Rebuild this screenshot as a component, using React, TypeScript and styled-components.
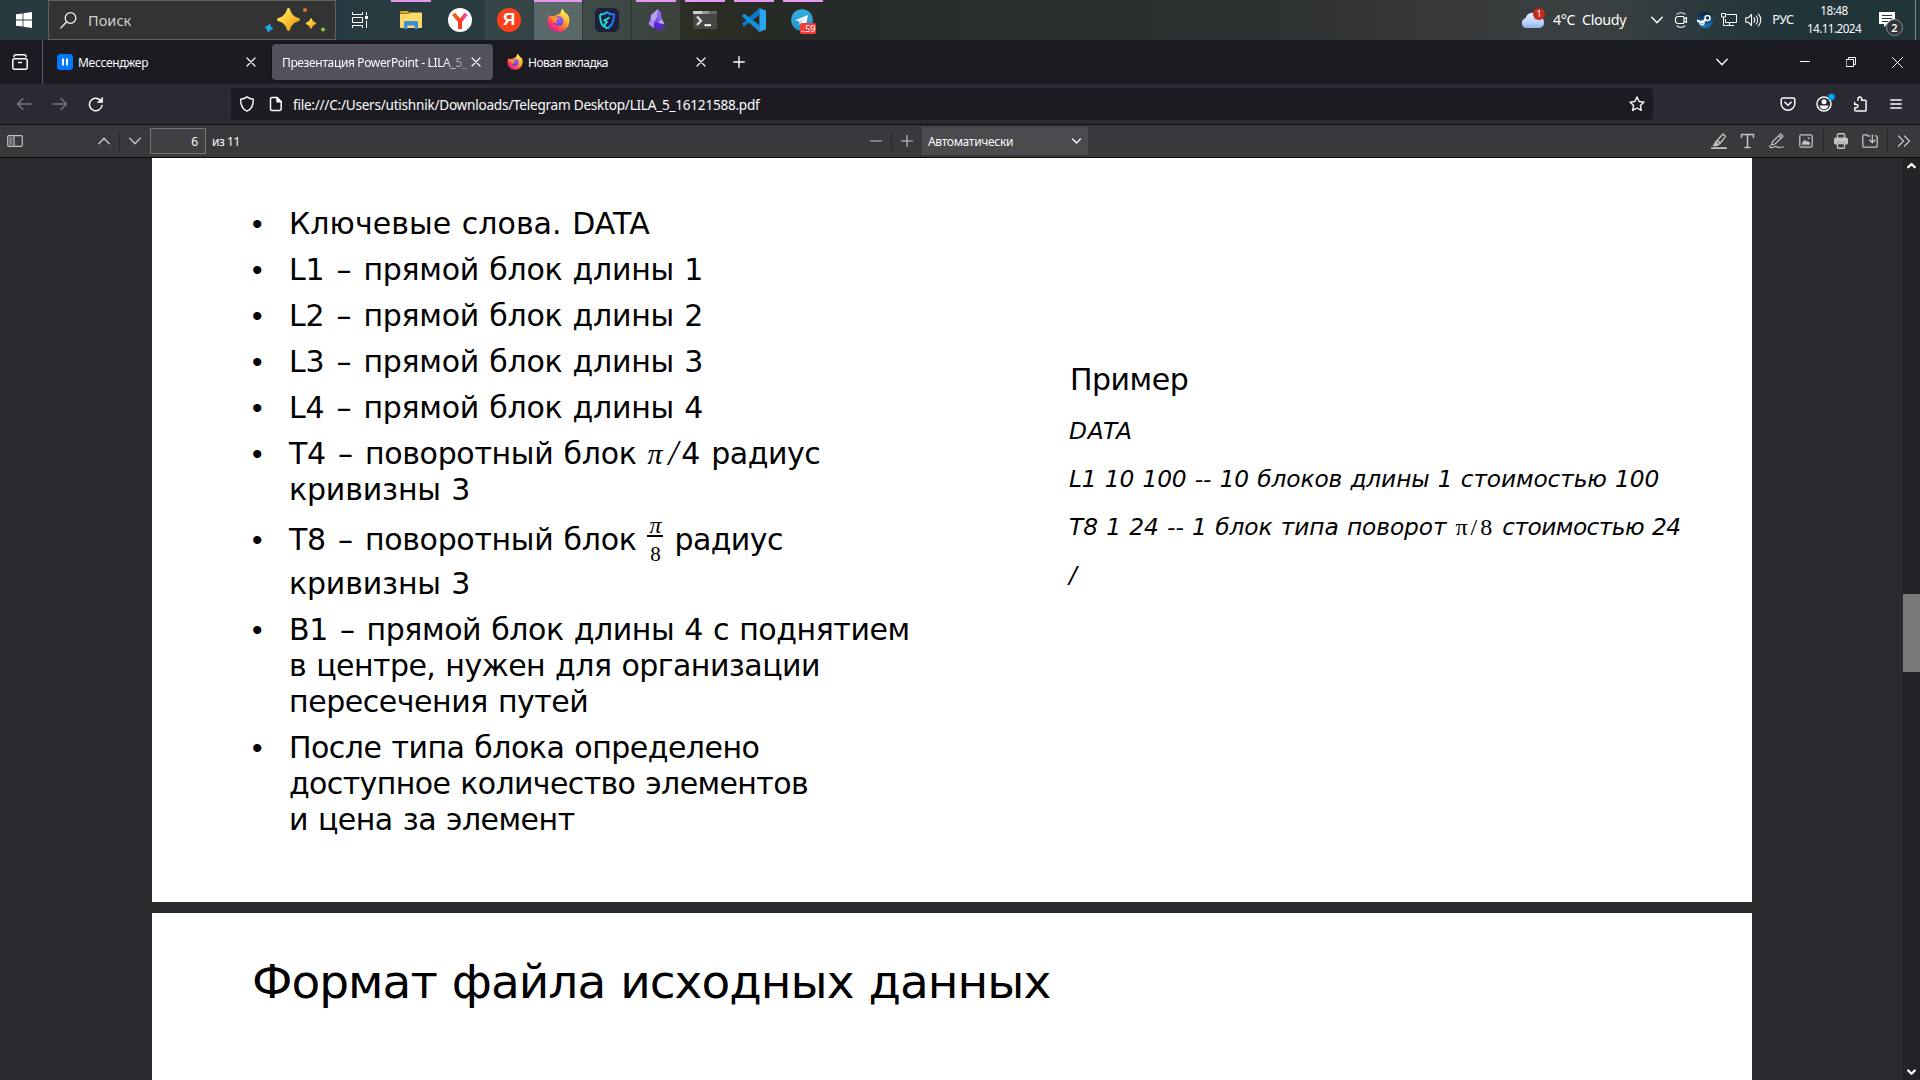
import React from 'react';
import styled, { createGlobalStyle, css } from 'styled-components';

const UI = '"Noto Sans", "Open Sans", sans-serif';
const SLIDE = '"DejaVu Sans", Verdana, sans-serif';
const MATH = '"Liberation Serif", "Times New Roman", serif';

const GlobalStyle = createGlobalStyle`
  *, *::before, *::after { box-sizing: border-box; }
  body { margin: 0; background: #2a2a2e; overflow: hidden; }
  svg { display: block; flex: none; }
`;

const Screen = styled.div`
  width: 1920px;
  height: 1080px;
  display: flex;
  flex-direction: column;
  overflow: hidden;
  font-family: ${UI};
  color: #fbfbfe;
`;

const Label = styled.span<{ $size: number; $track?: number; $color?: string; $drop?: number }>`
  font-size: ${p => p.$size}px;
  letter-spacing: ${p => p.$track ?? 0}px;
  color: ${p => p.$color ?? 'inherit'};
  line-height: 18px;
  padding-top: ${p => p.$drop ?? 0}px;
  white-space: pre;
`;

const Slot = styled.div<{ $w: number }>`
  width: ${p => p.$w}px;
  height: 100%;
  flex: none;
  display: flex;
  align-items: center;
  justify-content: center;
`;

/* ---------- taskbar ---------- */

const Taskbar = styled.header`
  height: 40px;
  flex: none;
  display: flex;
  align-items: stretch;
  background: linear-gradient(90deg, #25393e 0, #263b41 340px, #2a3b3e 500px, #2c3630 620px, #2b2d22 700px, #262b27 800px, #282c2b 960px, #2f3232 1300px, #383a39 1440px, #3a4042 1600px, #21343a 1780px, #20343a 100%);
`;

const SearchBox = styled.div`
  width: 288px;
  border: 1px solid #626262;
  background: #333333;
  display: flex;
  align-items: center;
  padding: 0 9px 0 11px;
`;

const SearchText = styled(Label)`
  margin-left: 11px;
  flex: 1;
`;

const TaskViewSlot = styled(Slot)`
  margin-right: 3px;
`;

const AppButton = styled.div<{ $tint?: number; $line?: 'short' | 'full' }>`
  width: 48px;
  margin-right: 1px;
  display: flex;
  align-items: center;
  justify-content: center;
  background-color: rgba(190, 205, 210, ${p => p.$tint ?? 0});
  ${p => p.$line && css`
    background-image: linear-gradient(#e697f2, #e697f2);
    background-repeat: no-repeat;
    background-position: top center;
    background-size: ${p.$line === 'full' ? '48px' : '40px'} 2px;
  `}
`;

const Tray = styled.div`
  margin-left: auto;
  display: flex;
  align-items: center;
`;

const Weather = styled.div`
  width: 124px;
  display: flex;
  align-items: center;
  gap: 8px;
`;

const Clock = styled.div`
  width: 66px;
  height: 40px;
  display: flex;
  flex-direction: column;
  align-items: center;
  padding-top: 1px;
`;

const ShowDesktop = styled.div`
  width: 5px;
  height: 40px;
  border-left: 1px solid #7d888b;
`;

/* ---------- tabs ---------- */

const TabStrip = styled.div`
  height: 44px;
  flex: none;
  background: #1c1b22;
  display: flex;
  align-items: center;
`;

const ViewButton = styled.div`
  width: 43px;
  height: 44px;
  padding-right: 2px;
  border-right: 1px solid #5b5b66;
  display: flex;
  align-items: center;
  justify-content: center;
`;

const Tabs = styled.div`
  height: 44px;
  display: flex;
  align-items: center;
  gap: 4px;
  margin-left: 4px;
`;

const Tab = styled.div<{ $active?: boolean }>`
  width: 221px;
  height: 36px;
  border-radius: 4px;
  padding: 0 12px 0 10px;
  display: flex;
  align-items: center;
  background: ${p => (p.$active ? '#52525e' : 'transparent')};
  box-shadow: ${p => (p.$active ? '0 0 3px rgba(0, 0, 0, .6)' : 'none')};
`;

const TabTitle = styled(Label)<{ $fade?: boolean }>`
  flex: 1;
  padding-left: ${p => (p.$fade ? 0 : 5)}px;
  margin-right: 2px;
  ${p => p.$fade && css`mask-image: linear-gradient(90deg, #000 160px, rgba(0, 0, 0, .25) 187px);`}
`;

const WindowControls = styled.div`
  margin-left: auto;
  height: 44px;
  display: flex;
`;

const ListTabs = styled(Slot)`
  margin-right: 43px;
`;

/* ---------- navigation ---------- */

const NavBar = styled.div`
  height: 40px;
  flex: none;
  background: #2b2a33;
  display: flex;
  align-items: center;
  padding: 0 6px;
`;

const UrlBar = styled.div`
  margin-left: 117px;
  width: 1422px;
  height: 32px;
  border-radius: 4px;
  background: #1c1b22;
  display: flex;
  align-items: center;
  padding-right: 8px;
`;

const TrackingSlot = styled(Slot)`
  padding-left: 2px;
`;

const DocSlot = styled(Slot)`
  padding-left: 1px;
`;

const Url = styled(Label)`
  margin-left: 4px;
  flex: 1;
`;

const NavRight = styled.div`
  margin-left: auto;
  height: 40px;
  display: flex;
`;

/* ---------- pdf viewer ---------- */

const PdfBar = styled.div`
  height: 34px;
  flex: none;
  border-top: 1px solid #0c0c0d;
  border-bottom: 1px solid #0c0c0d;
  background: #38383d;
  display: grid;
  grid-template-columns: 861px 230px 1fr;
  color: #f9f9fa;
`;

const PdfGroup = styled.div<{ $end?: boolean }>`
  display: flex;
  align-items: center;
  justify-content: ${p => (p.$end ? 'flex-end' : 'flex-start')};
`;

const Divider = styled.i<{ $h?: number; $after?: number }>`
  width: 1px;
  height: ${p => p.$h ?? 18}px;
  margin-right: ${p => p.$after ?? 0}px;
  background: #26262a;
`;

const SidebarToggle = styled(Slot)`
  margin-right: 59px;
`;

const PageInput = styled.div`
  width: 56px;
  height: 26px;
  margin-right: 6px;
  border: 1px solid #737378;
  background: #404044;
  display: flex;
  align-items: center;
  justify-content: flex-end;
  padding-right: 7px;
`;

const ZoomSelect = styled.div`
  width: 166px;
  height: 28px;
  background: #4a4a4f;
  display: flex;
  align-items: center;
  justify-content: space-between;
  padding: 0 7px 0 6px;
`;

const Viewer = styled.main`
  flex: 1;
  min-height: 0;
  display: grid;
  grid-template-columns: 1fr 17px;
  background: #2a2a2e;
`;

const Pages = styled.div`
  display: flex;
  flex-direction: column;
  gap: 11px;
  padding-left: 152px;
  overflow: hidden;
`;

const Page = styled.section<{ $h: number }>`
  width: 1600px;
  height: ${p => p.$h}px;
  flex: none;
  background: #ffffff;
  color: #000000;
  font-family: ${SLIDE};
  display: flex;
  align-items: flex-start;
`;

const Bullets = styled.ul`
  list-style: none;
  margin: 0;
  padding: 48px 0 0 100px;
  width: 917px;
  display: flex;
  flex-direction: column;
  gap: 10px;
`;

const Bullet = styled.li<{ $top?: number }>`
  display: flex;
  padding-top: ${p => p.$top ?? 0}px;
  &::before {
    content: '•';
    width: 37px;
    flex: none;
    font: 30px/36px "Liberation Sans", Arial, sans-serif;
  }
`;

const Lines = styled.div`
  display: flex;
  flex-direction: column;
`;

const Line = styled.div<{ $track?: number; $h?: number }>`
  height: ${p => p.$h ?? 36}px;
  display: flex;
  font-size: 30px;
  line-height: 36px;
  letter-spacing: ${p => p.$track ?? 0}px;
  word-spacing: 1px;
  white-space: pre;
`;

const Dash = styled.span`
  padding: 0 2px;
`;

const Run = styled.span<{ $track?: number; $left?: number }>`
  letter-spacing: ${p => p.$track ?? 0}px;
  margin-left: ${p => p.$left ?? 0}px;
`;

const Symbol = styled.span<{ $size: number; $left?: number; $italic?: boolean; $track?: number }>`
  font-family: ${MATH};
  font-style: ${p => (p.$italic ? 'italic' : 'normal')};
  font-size: ${p => p.$size}px;
  letter-spacing: ${p => p.$track ?? 0}px;
  margin-left: ${p => p.$left ?? 0}px;
`;

const Fraction = styled.span`
  width: 16px;
  height: 46px;
  margin: -7px 0 0 11px;
  display: flex;
  flex-direction: column;
  align-items: center;
  letter-spacing: 0;
  font: 21px/23px ${MATH};
`;

const Numerator = styled.span`
  height: 24px;
  line-height: 20px;
  font-style: italic;
  font-size: 24px;
`;

const FractionBar = styled.i`
  width: 16px;
  height: 2px;
  flex: none;
  background: #000;
`;

const Denominator = styled.span`
  padding-top: 6px;
`;

const Example = styled.div`
  padding-top: 204px;
`;

const ExampleLine = styled.div<{ $track?: number }>`
  height: 48px;
  display: flex;
  align-items: baseline;
  line-height: 48px;
  font-size: 23.3px;
  font-style: italic;
  letter-spacing: ${p => p.$track ?? 0}px;
  word-spacing: 1px;
  white-space: pre;
`;

const ExampleTitle = styled.div`
  height: 45px;
  padding-left: 1px;
  font-size: 30px;
  line-height: 36px;
  letter-spacing: -0.5px;
`;

const Heading = styled.h1`
  margin: 0;
  padding: 39px 0 0 100px;
  font-size: 47px;
  line-height: 60px;
  font-weight: 400;
  letter-spacing: -0.98px;
  word-spacing: 1px;
  white-space: nowrap;
`;

const Scrollbar = styled.div`
  background: #232327;
  display: flex;
  flex-direction: column;
  align-items: center;
  padding: 4px 0 4px;
`;

const Thumb = styled.div`
  width: 17px;
  height: 78px;
  margin: 425px 0 auto;
  background: #7a7a7c;
`;

/* ---------- icons ---------- */

type IconProps = { w: number; h?: number; sw?: number; color?: string; box?: string; children: React.ReactNode };
const Icon = ({ w, h = w, sw = 1.4, color = '#fbfbfe', box, children }: IconProps) => (
  <svg width={w} height={h} viewBox={box ?? `0 0 ${w} ${h}`} fill="none" stroke={color} strokeWidth={sw} strokeLinecap="round" strokeLinejoin="round">
    {children}
  </svg>
);

const Close = () => <Icon w={10} sw={1.2}><path d="M1 1l8 8M9 1l-8 8" /></Icon>;
const Chevron = ({ w = 12, up, color, sw = 1.4 }: { w?: number; up?: boolean; color?: string; sw?: number }) => (
  <Icon w={w} h={8} box="0 0 12 8" color={color} sw={sw}><path d={up ? 'M.8 6.7L6 1.3l5.200 5.400' : 'M.8 1.300L6 6.700l5.200-5.400'} /></Icon>
);

const Firefox = ({ s, id }: { s: number; id: string }) => (
  <svg width={s} height={s} viewBox="0 0 24 24">
    <defs>
      <linearGradient id={`${id}b`} x1=".85" y1=".1" x2=".2" y2=".95">
        <stop offset="0" stopColor="#fff44f" /><stop offset=".35" stopColor="#ffb02e" /><stop offset=".6" stopColor="#ff6a3a" /><stop offset=".85" stopColor="#f5287a" /><stop offset="1" stopColor="#e0159a" />
      </linearGradient>
      <linearGradient id={`${id}y`} x1="0" y1="0" x2="0" y2="1"><stop offset="0" stopColor="#fff44f" /><stop offset="1" stopColor="#ffa930" /></linearGradient>
      <radialGradient id={`${id}p`} cx=".6" cy=".3" r=".8"><stop offset="0" stopColor="#a35cff" /><stop offset="1" stopColor="#5b3fd6" /></radialGradient>
    </defs>
    <path d="M2.800 5.600C3.100 6.900 3.400 7.400 4 7.900c1.300-.5 2.700-.5 3.800-.1C9 6.500 10.300 6 11.300 5.800l3-1.500C14.300 2.400 15.200 1 16.600 0c.2 1.900 1.500 2.900 2.900 4.400.4.500.7 1 .9 1.400l.4-1.200c2 2.300 2.900 5.300 2.600 8.600C22.900 19.200 18.100 23.800 12 23.800 5.600 23.800.7 19 .7 12.700c0-2.800.8-5.300 2.100-7.100z" fill={`url(#${id}b)`} />
    <path d="M14.300 4.300C14.300 2.400 15.200 1 16.600 0c.2 1.900 1.500 2.900 2.900 4.400 2.900 3.600 2.600 8.800-.4 11.400.5-3.400-.7-5.200-2.100-6.900-1.600-1.300-2.700-2.600-2.700-4.600z" fill={`url(#${id}y)`} />
    <circle cx="12.200" cy="12.600" r="5" fill={`url(#${id}p)`} />
    <path d="M4 7.900c2-.8 4.200-.3 5.300.9 1.400-.2 2.900.2 3.300.9-.3 1.200-2.500 1.300-2.900 2.200-.4 1 .3 2 1.600 2.300-2 1-4.600-.2-4.900-2.600C5.300 11 4.200 9.800 4 7.900z" fill="#ff9a2b" />
  </svg>
);

const Windows = () => (
  <svg width="16" height="16" viewBox="0 0 16 16" fill="#fff">
    <path d="M0 2.300l6.600-.9v6.200H0zM7.400 1.300L16 .1v7.500H7.400zM0 8.400h6.600v6.200L0 13.700zM7.400 8.400H16v7.500l-8.600-1.200z" />
  </svg>
);

const star4 = (cx: number, cy: number, r: number) => {
  const k = r * 0.2;
  return `M${cx} ${cy - r}Q${cx + k} ${cy - k} ${cx + r} ${cy}Q${cx + k} ${cy + k} ${cx} ${cy + r}Q${cx - k} ${cy + k} ${cx - r} ${cy}Q${cx - k} ${cy - k} ${cx} ${cy - r}z`;
};

const Sparkles = () => (
  <svg width="62" height="28" viewBox="0 0 62 28">
    <defs><linearGradient id="gold" x1="0" y1="0" x2="1" y2="1"><stop offset=".2" stopColor="#ffdf4d" /><stop offset=".8" stopColor="#f0a81c" /></linearGradient></defs>
    <path d={star4(24.5, 13.5, 10)} fill="url(#gold)" stroke="url(#gold)" strokeWidth="3" strokeLinejoin="round" />
    <path d={star4(47, 17.5, 4.5)} fill="url(#gold)" stroke="url(#gold)" strokeWidth="1.500" strokeLinejoin="round" />
    <path d={star4(5, 22, 3.4)} fill="#1ea7e8" stroke="#1ea7e8" strokeWidth="1.600" strokeLinejoin="round" transform="rotate(12 5 22)" />
    <circle cx="41" cy="4" r="2.100" fill="#f0682a" />
    <circle cx="59" cy="23.500" r="2.100" fill="#84c341" />
  </svg>
);

const TaskView = () => (
  <svg width="16" height="16" viewBox="0 0 16 16" fill="none" stroke="#fff">
    <path d="M.5 0v2.500h10V0M.5 16v-2.500h10V16M.5 5.500h10v5H.5zM14.500 0v3.500M14.500 8.500V16" /><path d="M13 4h3v3h-3z" fill="#fff" stroke="none" />
  </svg>
);

const Folder = () => (
  <svg width="22" height="18" viewBox="0 0 22 18">
    <path d="M0 1a1 1 0 011-1h7l2 2.500H0z" fill="#e8a317" /><path d="M0 3l9-.2L10.500 1.500H21a1 1 0 011 1V17H0z" fill="#ffd869" />
    <path d="M4 18v-6.500a1.500 1.500 0 011.500-1.500h11a1.500 1.500 0 011.500 1.500V18h-3.500v-3.500h-7V18z" fill="#3a8fd8" />
  </svg>
);

const Round = styled.span<{ $bg: string }>`
  width: 24px;
  height: 24px;
  border-radius: 50%;
  background: ${p => p.$bg};
  color: #fff;
  font: 700 17px/24px "Liberation Sans", Arial, sans-serif;
  text-align: center;
`;

const YBrowser = () => (
  <svg width="24" height="24" viewBox="0 0 24 24">
    <defs><linearGradient id="ybr" x1="0" y1="0" x2="1" y2="0"><stop offset=".1" stopColor="#ff5c1a" /><stop offset=".55" stopColor="#fb3b20" /><stop offset="1" stopColor="#f54bd0" /></linearGradient></defs>
    <circle cx="12" cy="12" r="12" fill="#fff" />
    <path d="M5.500 5.800L12 13.500l6.200-7.700M12 12.500V21" stroke="url(#ybr)" strokeWidth="3.800" fill="none" />
    <path d="M12 13v8" stroke="#fb3b20" strokeWidth="3.800" />
  </svg>
);

const Shield = () => (
  <svg width="24" height="24" viewBox="0 0 24 24">
    <defs><linearGradient id="shd" x1="0" y1="0" x2="1" y2="0"><stop offset="0" stopColor="#17dfe0" /><stop offset="1" stopColor="#1769ff" /></linearGradient></defs>
    <rect width="24" height="24" rx="5" fill="#1f2038" />
    <path d="M5 6.500c3 0 5-.8 7-2.200 2 1.400 4 2.200 7 2.200 0 7-1.500 11-6.500 14" fill="none" stroke="url(#shd)" strokeWidth="2.200" />
    <path d="M5 6.500c0 5 .6 8.500 3 11.500M14.500 9.500l-5 2.800 2.300 1.700-3 4.200 3.700 2.300" fill="none" stroke="#17dfe0" strokeWidth="1.900" />
  </svg>
);

const Obsidian = () => (
  <svg width="18" height="24" viewBox="0 0 18 24">
    <path d="M4 7L11 1l3 4 .5 6 3 5-3.500 6.500-7-2L1.500 16z" fill="#7b4de0" />
    <path d="M4 7l7-6-.5 7L7 14l-3 .5z" fill="#b9a1f5" /><path d="M11 1l3 4 .5 6-3 4-1-7z" fill="#8a63e8" />
    <path d="M1.500 16L4 12l3 2-.2 6z" fill="#a78bf5" /><path d="M7 14l4.500 1 6 1-3.500 6.500-7-2z" fill="#5929c9" /><path d="M11.500 15l3-4 3 5z" fill="#c3b0f8" />
  </svg>
);

const Terminal = () => (
  <svg width="24" height="18" viewBox="0 0 24 18">
    <rect width="24" height="18" rx="1" fill="#464646" /><path d="M0 1a1 1 0 011-1h8v3H0z" fill="#cfcfcf" /><path d="M9 0h7v3H9z" fill="#9a9a9a" /><path d="M16 0h7a1 1 0 011 1v2h-8z" fill="#6a6a6a" />
    <path d="M4 5.500l4 4.200L4 14" fill="none" stroke="#d8d8d8" strokeWidth="2.400" /><path d="M11.500 14.200H18" stroke="#fff" strokeWidth="2" />
  </svg>
);

const VsCode = () => (
  <svg width="24" height="24" viewBox="0 0 24 24">
    <path d="M.5 15.200L17.500 0v6.800L2.800 17.900a1 1 0 01-1.200 0l-1.200-1.100a1.100 1.100 0 01.1-1.600z" fill="#0b77c5" />
    <path d="M.5 8.800L17.500 24v-6.800L2.800 6.100a1 1 0 00-1.200 0L.4 7.200a1.100 1.100 0 00.1 1.600z" fill="#1590dd" />
    <path d="M17.400 0L24 2.800v18.400L17.400 24z" fill="#29a8f2" />
  </svg>
);

const TelegramWrap = styled.div`
  width: 24px;
  height: 24px;
  position: relative;
`;

const TelegramBadge = styled.span`
  position: absolute;
  left: 9px;
  top: 15px;
  width: 16px;
  height: 11px;
  border-radius: 2px;
  background: #f23c34;
  font: 9px/11px ${UI};
  letter-spacing: -0.1px;
  text-align: center;
  color: #fff;
`;

const Telegram = () => (
  <TelegramWrap>
    <svg width="22" height="24" viewBox="0 0 22 24">
      <defs><linearGradient id="tg" x1="0" y1="0" x2="0" y2="1"><stop offset="0" stopColor="#37aee2" /><stop offset="1" stopColor="#1e96c8" /></linearGradient></defs>
      <circle cx="11" cy="12" r="10.800" fill="url(#tg)" /><path d="M4 12.200L17 7l-2.300 11-4-3-2 2-.5-3.800z" fill="#fff" /><path d="M8.500 13.200L14.500 9l-4.700 5.500-.9 2z" fill="#b5d4e8" />
    </svg>
    <TelegramBadge>..59</TelegramBadge>
  </TelegramWrap>
);

const CloudWrap = styled.div`
  width: 24px;
  height: 24px;
  position: relative;
`;

const AlertBadge = styled.span`
  position: absolute;
  left: 12px;
  top: 0;
  width: 12px;
  height: 12px;
  border-radius: 50%;
  background: #c42b1c;
  font: 9px/12px ${UI};
  text-align: center;
`;

const Cloud = () => (
  <CloudWrap>
    <svg width="24" height="24" viewBox="0 0 24 24">
      <defs><linearGradient id="cl" x1="0" y1="0" x2="0" y2="1"><stop offset="0" stopColor="#e8f1ff" /><stop offset=".7" stopColor="#b3cdf8" /><stop offset="1" stopColor="#8fb2ee" /></linearGradient></defs>
      <path d="M5 20a5 5 0 01-.6-9.700 7.800 7.800 0 0114.500-1A5.500 5.500 0 0118.700 20z" fill="url(#cl)" />
    </svg>
    <AlertBadge>1</AlertBadge>
  </CloudWrap>
);

const Meet = () => (
  <Icon w={14} h={18} sw={1.1} color="#fff"><path d="M3 3.200C5 1.200 9 1.200 11 3.200M3 14.800c2 2 6 2 8 0M4 5.500h5a1 1 0 011 1v5a1 1 0 01-1 1H4A2.500 2.500 0 011.500 10V8A2.500 2.500 0 014 5.500zM10 8l2.500-1.500v5L10 10" /></Icon>
);

const Steam = () => (
  <svg width="16" height="16" viewBox="0 0 16 16">
    <defs><linearGradient id="st" x1="0" y1="0" x2="0" y2="1"><stop offset="0" stopColor="#0b1a3a" /><stop offset="1" stopColor="#1a7fc4" /></linearGradient></defs>
    <circle cx="8" cy="8" r="8" fill="url(#st)" /><path d="M0 8.500l5 2 4-3" stroke="#fff" strokeWidth="2.200" fill="none" />
    <circle cx="5" cy="11" r="2" fill="none" stroke="#fff" strokeWidth="1.200" /><circle cx="10.500" cy="6" r="2.500" fill="#12305c" stroke="#fff" strokeWidth="1.500" />
  </svg>
);

const Network = () => (
  <svg width="16" height="14" viewBox="0 0 16 14" fill="none" stroke="#fff"><path d="M5.500 1.500h10v8h-11V6M8.500 9.500v3M5 12.500h8M.5.500h4v3.500h-4zM2.500 4v8.500h2" /></svg>
);

const Volume = () => (
  <Icon w={17} h={14} sw={1.1} color="#fff"><path d="M.8 4.800h2.400L6.500 1.500v11L3.200 9.200H.8zM9 4.800c1 1.300 1 3.100 0 4.400M11.200 3c2 2.300 2 5.700 0 8M13.500 1.200c3 3.400 3 8.200 0 11.600" /></Icon>
);

const NotifyWrap = styled.div`
  width: 24px;
  height: 26px;
  position: relative;
`;

const NotifyBadge = styled.span`
  position: absolute;
  left: 7px;
  top: 12px;
  width: 17px;
  height: 17px;
  border-radius: 50%;
  border: 1px solid #8d9294;
  background: #303436;
  font: 600 11px/15px ${UI};
  text-align: center;
`;

const NotifyGlyph = styled.svg`
  margin-top: 4px;
`;

const Notifications = () => (
  <NotifyWrap>
    <NotifyGlyph width="16" height="18" viewBox="0 0 16 18"><path d="M0 1h16v12H8l-3 3v-3H0z" fill="#fff" /><path d="M3 4.500h10M3 7.500h10M3 10.500h6" stroke="#26373c" /></NotifyGlyph>
    <NotifyBadge>2</NotifyBadge>
  </NotifyWrap>
);

const TabView = () => (
  <Icon w={16} sw={1.5}><rect x=".8" y="4.800" width="14.400" height="10.400" rx="2" /><path d="M2 2.800h0C2 1.500 3 .8 4 .8h8c1 0 2 .7 2 2M6.500 8.500h3" /></Icon>
);

const Messenger = () => (
  <svg width="16" height="16" viewBox="0 0 16 16"><rect width="16" height="16" rx="3.500" fill="#0077ff" /><path d="M6 4.500v7M10 4.500v7" stroke="#fff" strokeWidth="2" /></svg>
);

const Back = () => <Icon w={16} color="#77767e"><path d="M1.500 8H15M7 2.500L1.500 8 7 13.500" /></Icon>;
const Forward = () => <Icon w={16} color="#77767e"><path d="M14.500 8H1M9 2.500L14.500 8 9 13.500" /></Icon>;
const Reload = () => <Icon w={16} sw={1.5}><path d="M14 9.500A6.300 6.300 0 1112.200 4" /><path d="M14.600 1.400v5h-5z" fill="#fbfbfe" strokeWidth=".6" /></Icon>;
const Tracking = () => <Icon w={16}><path d="M8 .9c2 1.400 4 2.100 6.300 2.300C14.500 8.800 12.600 13.200 8 15.200 3.400 13.200 1.500 8.800 1.700 3.200 4 3 6 2.300 8 .9z" /></Icon>;
const Doc = () => <Icon w={16} sw={1.5}><path d="M4 1.500h5L13.200 5.700V13a1.500 1.500 0 01-1.500 1.500H4A1.500 1.500 0 012.500 13V3A1.500 1.500 0 014 1.500z" /><path d="M9 1.500v4.200h4.200z" fill="#fbfbfe" /></Icon>;
const Star = () => <Icon w={16}><path d="M8 1l2.100 4.500 4.900.6-3.600 3.400.9 4.900L8 12l-4.300 2.400.9-4.900L1 6.100l4.900-.6z" /></Icon>;
const Pocket = () => <Icon w={16} sw={1.5}><path d="M3 2h10a1.800 1.800 0 011.800 1.800V7.500a6.800 6.800 0 01-13.600 0V3.800A1.800 1.800 0 013 2z" /><path d="M4.800 6.300L8 9.300l3.200-3" /></Icon>;
const Account = () => (
  <svg width="22" height="22" viewBox="0 0 22 22">
    <circle cx="11" cy="11" r="7" fill="none" stroke="#fbfbfe" strokeWidth="1.500" /><circle cx="11" cy="8.800" r="2.500" fill="#fbfbfe" /><path d="M6.500 12.500h9c-.4 2.200-2.200 3.700-4.500 3.700s-4.100-1.500-4.500-3.700z" fill="#fbfbfe" />
    <circle cx="18.500" cy="4" r="3.300" fill="#00a2f4" />
  </svg>
);
const Extension = () => <Icon w={16} sw={1.5}><path d="M6 4.200V2.800a1.800 1.800 0 013.600 0v1.400h3.500a1 1 0 011 1v9a.9.900 0 01-.9.900H4a1.300 1.300 0 01-1.300-1.300v-2h1.600a1.700 1.700 0 000-3.400H2.700V6.600" /></Icon>;
const Menu = () => <Icon w={12} h={10} sw={1.5}><path d="M.8 1h10.400M.8 5h10.400M.8 9h10.400" /></Icon>;

const G = '#c4c4c6';
const Sidebar = () => <Icon w={16} h={12} sw={1.2} color={G}><rect x=".7" y=".7" width="14.600" height="10.600" rx="1.200" /><path d="M7 .8v10.400M2.500 3h2.500M2.500 5h2.500M2.500 7h2.500M2.500 9h2.500" /></Icon>;
const Highlight = () => <Icon w={16} sw={1.3} color={G}><path d="M.8 15.200h14.400" strokeWidth="1.800" /><path d="M12 1l2.500 2.300-5 6.700-3.200-2.700zM6 7.500L9 10l-1.500 1.700-3-2.200z" /><path d="M4.500 9.500l2.500 2-1.200 1H2.500z" fill={G} /></Icon>;
const FreeText = () => <Icon w={15} h={16} sw={1.5} color={G}><path d="M1.500 4.500V1.500h12v3M7.500 1.500v13M5 14.500h5" /></Icon>;
const Draw = () => <Icon w={16} sw={1.2} color={G}><path d="M11.500 1l2.500 2.300L6 11l-3.500 1 1.200-3.500zM9.800 2.800l2.500 2.300M1 12.500c-.8 1.500.5 2.500 2.500 2s2.500-1.500 4-1 1 1.500 2.500 1 2.500-.6 4.500-.5" /></Icon>;
const Image = () => <Icon w={14} sw={1.3} color={G}><rect x=".8" y=".8" width="12.400" height="12.400" rx="1.500" /><path d="M3.300 10.500V8.700L5.700 6l2 2 1-1 2 1.800v1.700z" fill={G} strokeWidth=".5" /><path d="M9.500 4.300h.6" strokeWidth="1.600" /></Icon>;
const Print = () => (
  <svg width="14" height="16" viewBox="0 0 14 16"><path d="M3.500 5V1.500A.8.800 0 014.300.7h5.400a.8.800 0 01.8.8V5M3.500 10.500h7v4a.8.800 0 01-.8.800H4.300a.8.800 0 01-.8-.8z" fill="none" stroke={G} strokeWidth="1.400" /><path d="M2 4.500h10a2 2 0 012 2V10a1.500 1.500 0 01-1.500 1.500h-1.300V9.700H2.800v1.800H1.500A1.500 1.500 0 010 10V6.500a2 2 0 012-2z" fill={G} /></svg>
);
const Save = () => <Icon w={16} h={14} sw={1.3} color={G}><path d="M7.500 2H6L5 .8H2A1.200 1.200 0 00.8 2v10A1.200 1.200 0 002 13.200h12a1.200 1.200 0 001.200-1.200V3A1.200 1.200 0 0014 1.800h-.8M10.300.8v7.500M7.500 6l2.800 2.800L13 6" /></Icon>;
const More = () => <Icon w={14} h={12} sw={1.3} color={G}><path d="M1.500 1l5 5-5 5M7.500 1l5 5-5 5" /></Icon>;
const ScrollArrow = ({ up }: { up?: boolean }) => <Icon w={9} h={7} sw={2.3} color="#fff"><path d={up ? 'M1.200 5.300L4.500 2l3.300 3.300' : 'M1.200 1.500L4.500 4.800l3.300-3.300'} /></Icon>;

/* ---------- page ---------- */

const straight = [1, 2, 3, 4];

export default function App() {
  return (
    <Screen>
      <GlobalStyle />
      <Taskbar>
        <Slot $w={48}><Windows /></Slot>
        <SearchBox>
          <Icon w={17} sw={1.3} color="#f0f0f0"><circle cx="10.500" cy="6" r="5.300" /><path d="M6.700 9.800L.8 16" /></Icon>
          <SearchText $size={14.5} $track={0.05} $color="#d0d0d0">Поиск</SearchText>
          <Sparkles />
        </SearchBox>
        <TaskViewSlot $w={48}><TaskView /></TaskViewSlot>
        <AppButton $line="short"><Folder /></AppButton>
        <AppButton><YBrowser /></AppButton>
        <AppButton $tint={0.08}><Round $bg="#fc3f1d">Я</Round></AppButton>
        <AppButton $tint={0.32} $line="full"><Firefox s={23} id="task" /></AppButton>
        <AppButton $tint={0.12}><Shield /></AppButton>
        <AppButton $tint={0.12} $line="short"><Obsidian /></AppButton>
        <AppButton $line="short"><Terminal /></AppButton>
        <AppButton $line="short"><VsCode /></AppButton>
        <AppButton $line="short"><Telegram /></AppButton>
        <Tray>
          <Weather>
            <Cloud />
            <Label $size={14.3} $track={-0.35}>4°C  Cloudy</Label>
          </Weather>
          <Slot $w={24}><Chevron color="#fff" /></Slot>
          <Slot $w={24}><Meet /></Slot>
          <Slot $w={24}><Steam /></Slot>
          <Slot $w={24}><Network /></Slot>
          <Slot $w={24}><Volume /></Slot>
          <Slot $w={36}><Label $size={12.6} $track={-0.4}>РУС</Label></Slot>
          <Clock>
            <Label $size={11.7} $track={-0.5}>18:48</Label>
            <Label $size={11.7} $track={-0.55}>14.11.2024</Label>
          </Clock>
          <Slot $w={48}><Notifications /></Slot>
          <ShowDesktop />
        </Tray>
      </Taskbar>

      <TabStrip>
        <ViewButton><TabView /></ViewButton>
        <Tabs>
          <Tab>
            <Messenger />
            <TabTitle $size={12} $track={-0.3} $drop={2}>Мессенджер</TabTitle>
            <Close />
          </Tab>
          <Tab $active>
            <TabTitle $fade $size={12} $track={-0.36} $drop={2}>Презентация PowerPoint - LILA_5_</TabTitle>
            <Close />
          </Tab>
          <Tab>
            <Firefox s={16} id="tab" />
            <TabTitle $size={12} $track={-0.5} $drop={2}>Новая вкладка</TabTitle>
            <Close />
          </Tab>
          <Slot $w={34}><Icon w={12}><path d="M6 .7v10.600M.7 6h10.600" /></Icon></Slot>
        </Tabs>
        <WindowControls>
          <ListTabs $w={34}><Chevron /></ListTabs>
          <Slot $w={46}><Icon w={10} h={10} sw={1} color="#fff"><path d="M.5 4.500h9" /></Icon></Slot>
          <Slot $w={46}><Icon w={10} sw={1} color="#fff"><path d="M.5 2.500h7v7h-7zM2.500 2.500v-2h7v7h-2" /></Icon></Slot>
          <Slot $w={46}><Icon w={11} sw={1} color="#fff"><path d="M.5.5l10 10M10.500.5l-10 10" /></Icon></Slot>
        </WindowControls>
      </TabStrip>

      <NavBar>
        <Slot $w={36}><Back /></Slot>
        <Slot $w={36}><Forward /></Slot>
        <Slot $w={36}><Reload /></Slot>
        <UrlBar>
          <TrackingSlot $w={30}><Tracking /></TrackingSlot>
          <DocSlot $w={28}><Doc /></DocSlot>
          <Url $size={13.6} $track={-0.25} $drop={2}>file:///C:/Users/utishnik/Downloads/Telegram Desktop/LILA_5_16121588.pdf</Url>
          <Star />
        </UrlBar>
        <NavRight>
          <Slot $w={36}><Pocket /></Slot>
          <Slot $w={36}><Account /></Slot>
          <Slot $w={36}><Extension /></Slot>
          <Slot $w={36}><Menu /></Slot>
        </NavRight>
      </NavBar>

      <PdfBar>
        <PdfGroup>
          <SidebarToggle $w={30}><Sidebar /></SidebarToggle>
          <Slot $w={30}><Chevron up color={G} /></Slot>
          <Divider />
          <Slot $w={30}><Chevron color={G} /></Slot>
          <PageInput><Label $size={12} $drop={2}>6</Label></PageInput>
          <Label $size={12} $track={-0.45} $drop={2}>из 11</Label>
        </PdfGroup>
        <PdfGroup>
          <Slot $w={30}><Icon w={12} h={12} sw={1.2} color={G}><path d="M.5 6h11" /></Icon></Slot>
          <Divider />
          <Slot $w={30}><Icon w={12} sw={1.2} color={G}><path d="M.5 6h11M6 .5v11" /></Icon></Slot>
          <ZoomSelect>
            <Label $size={12} $track={-0.3} $drop={2}>Автоматически</Label>
            <Chevron w={9} sw={1.8} />
          </ZoomSelect>
        </PdfGroup>
        <PdfGroup $end>
          <Slot $w={24}><Highlight /></Slot>
          <Slot $w={33}><FreeText /></Slot>
          <Slot $w={25}><Draw /></Slot>
          <Slot $w={34}><Image /></Slot>
          <Divider $h={22} $after={5} />
          <Slot $w={24}><Print /></Slot>
          <Slot $w={34}><Save /></Slot>
          <Divider $h={22} />
          <Slot $w={32}><More /></Slot>
        </PdfGroup>
      </PdfBar>

      <Viewer>
        <Pages>
          <Page $h={744}>
            <Bullets>
              <Bullet><Lines><Line $track={0.05}>Ключевые слова. DATA</Line></Lines></Bullet>
              {straight.map(n => (
                <Bullet key={n}><Lines><Line $track={-0.28}>L{n} <Dash>–</Dash> прямой блок длины {n}</Line></Lines></Bullet>
              ))}
              <Bullet>
                <Lines>
                  <Line>
                    <Run $track={-0.32}>T4 <Dash>–</Dash> поворотный блок</Run>
                    <Symbol $italic $size={30} $left={11}>π</Symbol>
                    <Symbol $italic $size={35} $left={6}>/</Symbol>
                    <Run $left={3}>4</Run>
                    <Run $track={-0.5} $left={11}>радиус</Run>
                  </Line>
                  <Line $track={-0.15}>кривизны 3</Line>
                </Lines>
              </Bullet>
              <Bullet $top={4}>
                <Lines>
                  <Line $h={44}>
                    <Run $track={-0.32}>T8 <Dash>–</Dash> поворотный блок</Run>
                    <Fraction><Numerator>π</Numerator><FractionBar /><Denominator>8</Denominator></Fraction>
                    <Run $track={-0.6} $left={11}>радиус</Run>
                  </Line>
                  <Line $track={-0.15}>кривизны 3</Line>
                </Lines>
              </Bullet>
              <Bullet>
                <Lines>
                  <Line $track={-0.44}>B1 <Dash>–</Dash> прямой блок длины 4 с поднятием</Line>
                  <Line $track={-0.54}>в центре, нужен для организации</Line>
                  <Line $track={-0.46}>пересечения путей</Line>
                </Lines>
              </Bullet>
              <Bullet>
                <Lines>
                  <Line $track={-0.52}>После типа блока определено</Line>
                  <Line $track={-0.62}>доступное количество элементов</Line>
                  <Line $track={-0.53}>и цена за элемент</Line>
                </Lines>
              </Bullet>
            </Bullets>
            <Example>
              <ExampleTitle>Пример</ExampleTitle>
              <ExampleLine $track={0.9}>DATA</ExampleLine>
              <ExampleLine $track={-0.13}>L1 10 100 -- 10 блоков длины 1 стоимостью 100</ExampleLine>
              <ExampleLine>
                <Run $track={-0.08}>T8 1 24 -- 1 блок типа поворот</Run>
                <Symbol $size={24} $left={9} $track={3}>π/8</Symbol>
                <Run $track={-0.55} $left={7}>стоимостью 24</Run>
              </ExampleLine>
              <ExampleLine>/</ExampleLine>
            </Example>
          </Page>
          <Page $h={744}>
            <Heading>Формат файла исходных данных</Heading>
          </Page>
        </Pages>
        <Scrollbar>
          <ScrollArrow up />
          <Thumb />
          <ScrollArrow />
        </Scrollbar>
      </Viewer>
    </Screen>
  );
}
